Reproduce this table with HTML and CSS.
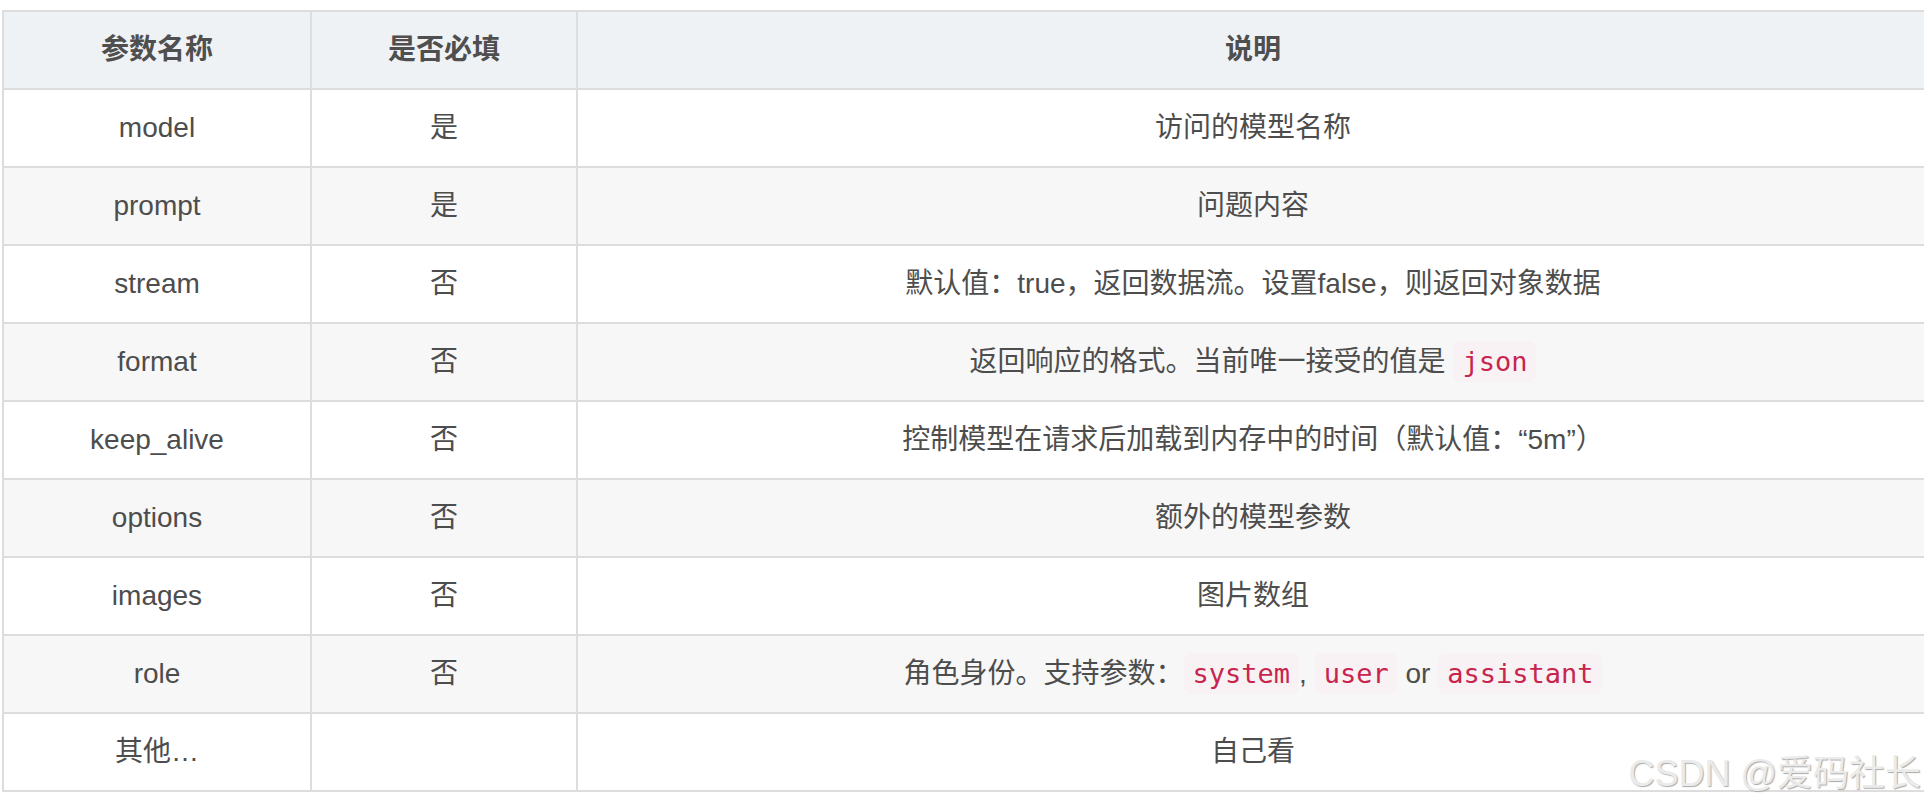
FILE: index.html
```html
<!DOCTYPE html>
<html lang="zh-CN">
<head>
<meta charset="utf-8">
<title>参数说明</title>
<link rel="stylesheet" href="styles.css">
</head>
<body>
<div class="page">
  <table class="params">
    <colgroup>
      <col class="c1">
      <col class="c2">
      <col class="c3">
    </colgroup>
    <thead>
      <tr><th>参数名称</th><th>是否必填</th><th>说明</th></tr>
    </thead>
    <tbody>
      <tr><td>model</td><td>是</td><td>访问的模型名称</td></tr>
      <tr><td>prompt</td><td>是</td><td>问题内容</td></tr>
      <tr><td>stream</td><td>否</td><td>默认值：true，返回数据流。设置false，则返回对象数据</td></tr>
      <tr><td>format</td><td>否</td><td>返回响应的格式。当前唯一接受的值是 <code>json</code></td></tr>
      <tr><td>keep_alive</td><td>否</td><td>控制模型在请求后加载到内存中的时间（默认值：“5m”）</td></tr>
      <tr><td>options</td><td>否</td><td>额外的模型参数</td></tr>
      <tr><td>images</td><td>否</td><td>图片数组</td></tr>
      <tr><td>role</td><td>否</td><td>角色身份。支持参数：<code>system</code>, <code>user</code> or <code>assistant</code></td></tr>
      <tr><td>其他…</td><td></td><td>自己看</td></tr>
    </tbody>
  </table>
  <div class="watermark">CSDN @爱码社长</div>
</div>
</body>
</html>
```
FILE: styles.css
```css
html, body {
  margin: 0;
  padding: 0;
  overflow: hidden;
  background: #ffffff;
}

.page {
  position: relative;
  padding: 10px 0 0 2px;
  width: 1924px;
  height: 788px;
  font-family: "Liberation Sans", "Noto Sans CJK SC", sans-serif;
  font-size: 28px;
  color: #4d4d4d;
}

.params {
  border-collapse: collapse;
  table-layout: fixed;
  width: 1926px;
}

.c1 { width: 308px; }
.c2 { width: 266px; }
.c3 { width: 1352px; }

.params th,
.params td {
  border: 2px solid #dddddd;
  height: 78px;
  padding: 0 10px;
  text-align: center;
  vertical-align: middle;
  line-height: 40px;
  box-sizing: border-box;
}

.params th {
  background: #eff2f5;
  font-weight: bold;
  color: #4f4f4f;
}

.params tbody tr:nth-child(even) td {
  background: #f7f7f7;
}

.params code {
  font-family: "DejaVu Sans Mono", monospace;
  font-size: 27px;
  color: #c7254e;
  background: #f9f2f4;
  padding: 5px 9px;
  border-radius: 7px;
}

.watermark {
  position: absolute;
  right: 5px;
  top: 744px;
  font-family: "Liberation Sans", "Noto Sans CJK SC", sans-serif;
  font-size: 36px;
  color: #ebebeb;
  text-shadow: 1px 1px 1px #aaaaaa, -1px -1px 0 #ffffff;
  white-space: nowrap;
}
```
